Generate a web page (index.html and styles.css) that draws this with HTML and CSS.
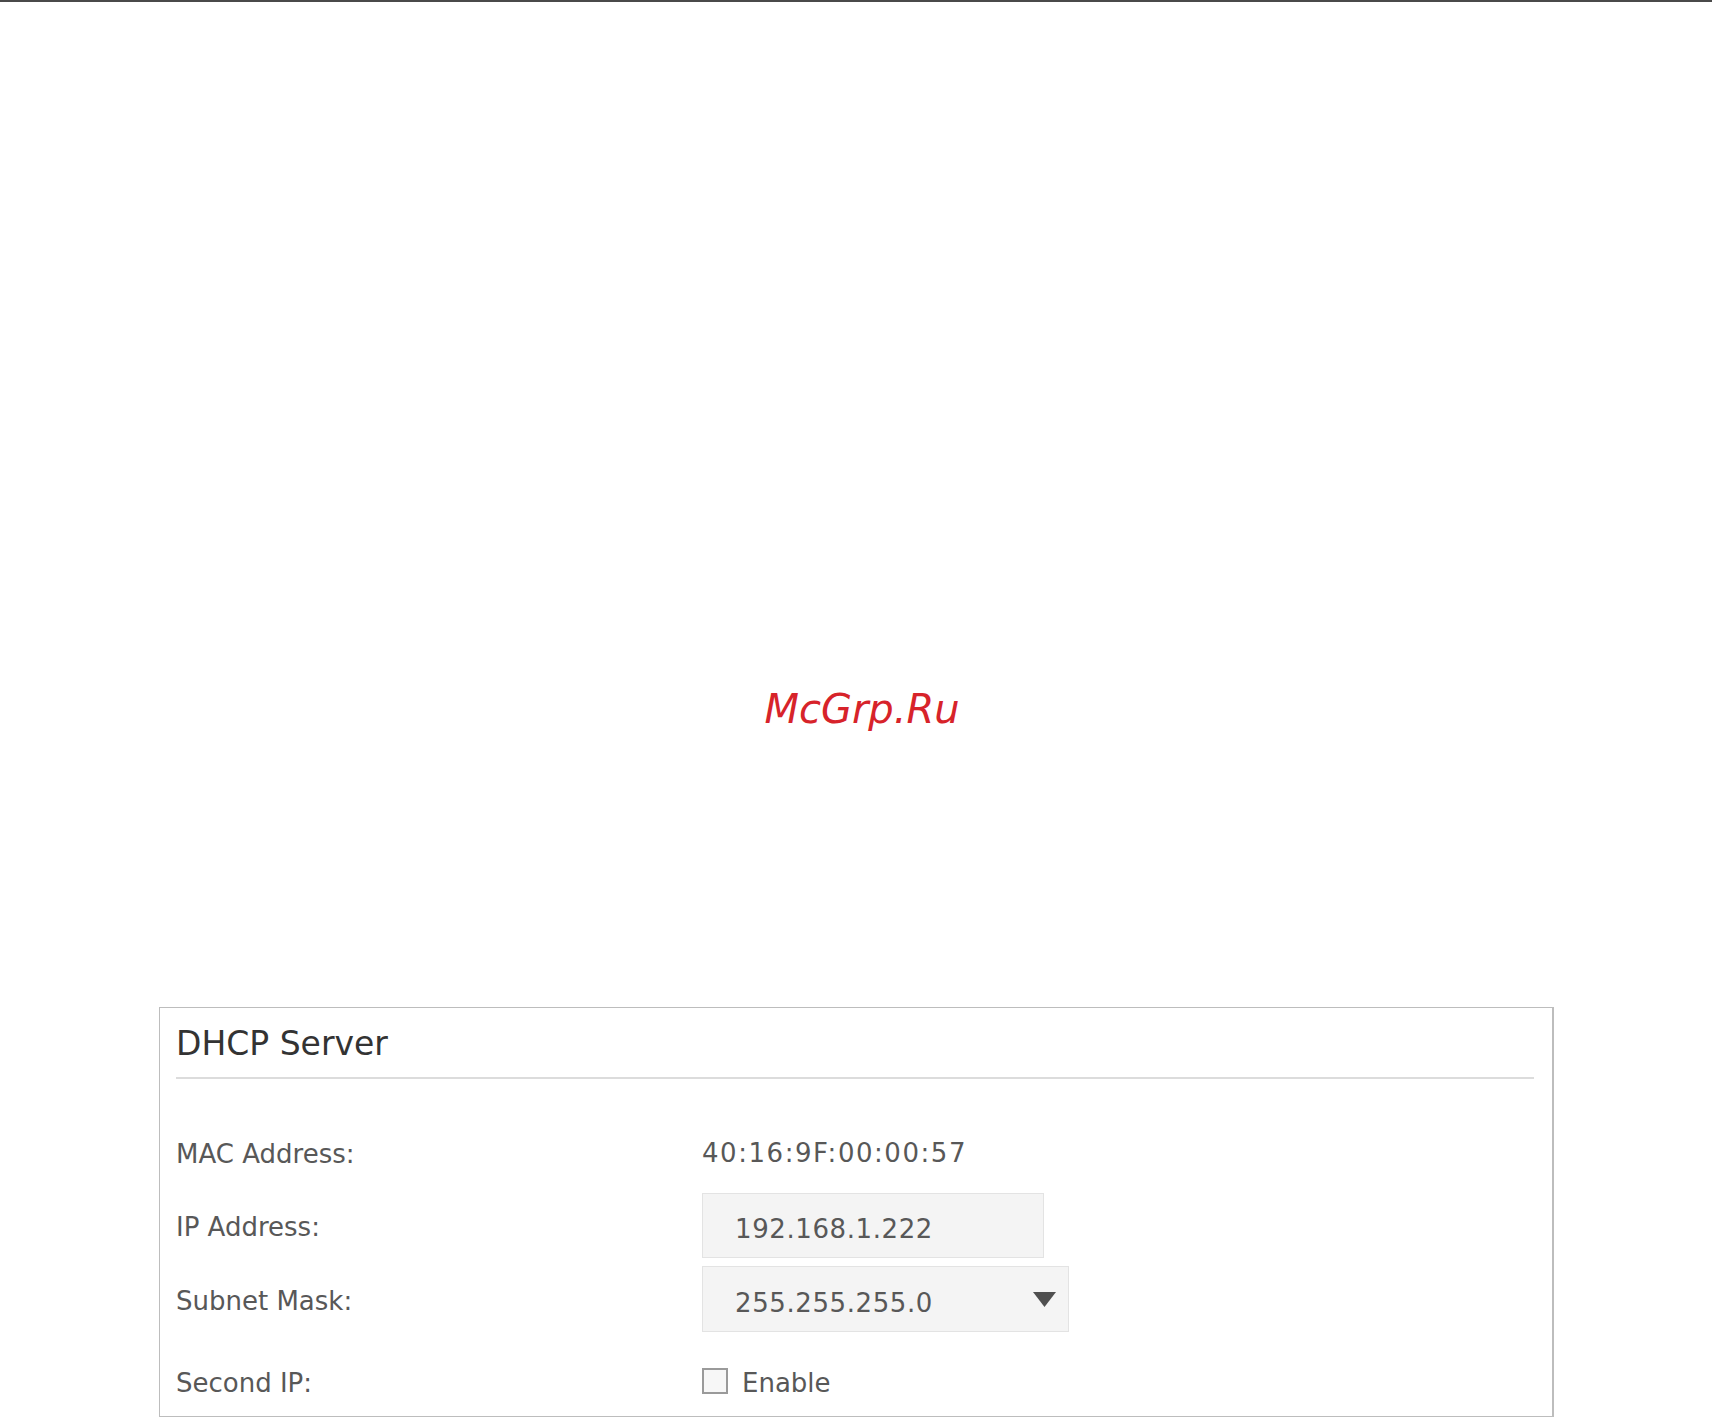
FILE: index.html
```html
<!DOCTYPE html>
<html lang="en">
<head>
<meta charset="utf-8">
<title>DHCP Server</title>
<link rel="stylesheet" href="styles.css">
</head>
<body>
<div class="topline"></div>
<div class="watermark">McGrp.Ru</div>
<section class="panel">
  <h2 class="panel-title">DHCP Server</h2>
  <div class="rows">
    <div class="row row-mac">
      <div class="label">MAC Address:</div>
      <div class="value value-mac">40:16:9F:00:00:57</div>
    </div>
    <div class="row row-ip">
      <div class="label">IP Address:</div>
      <div class="field field-ip">192.168.1.222</div>
    </div>
    <div class="row row-mask">
      <div class="label">Subnet Mask:</div>
      <div class="field field-select">255.255.255.0
        <svg class="caret" width="23" height="15" viewBox="0 0 23 15"><polygon points="0,0 23,0 11.5,15" fill="#4f4f4f"/></svg>
      </div>
    </div>
    <div class="row row-second">
      <div class="label">Second IP:</div>
      <label class="check"><span class="box"></span><span class="check-text">Enable</span></label>
    </div>
  </div>
</section>
</body>
</html>
```
FILE: styles.css
```css
html, body {
  margin: 0;
  padding: 0;
  background: #ffffff;
}
body {
  width: 1712px;
  height: 1417px;
  overflow: hidden;
  font-family: "DejaVu Sans", Verdana, sans-serif;
  color: #555555;
}
.topline {
  height: 2px;
  background: #4a4a4a;
}
.watermark {
  margin-top: 687px;
  height: 40px;
  line-height: 40px;
  font-size: 40px;
  font-style: italic;
  color: #d7232a;
  text-align: center;
  padding-left: 12px;
}
.panel {
  box-sizing: border-box;
  margin: 278px 0 0 159px;
  width: 1395px;
  height: 410px;
  border: 1px solid #bdbdbd;
  border-right-width: 2px;
  padding: 16px 18px 0 16px;
}
.panel-title {
  margin: 0;
  font-weight: normal;
  font-size: 33px;
  line-height: 40px;
  color: #333333;
  padding-bottom: 13px;
  border-bottom: 2px solid #dcdcdc;
}
.rows {
  display: flex;
  flex-direction: column;
}
.row {
  display: flex;
  align-items: center;
}
.label {
  width: 526px;
  flex: none;
  font-size: 26px;
  line-height: 32px;
  padding-top: 3px;
  color: #585858;
}
.row-mac {
  margin-top: 57px;
  height: 32px;
}
.row-ip {
  margin-top: 25px;
  height: 65px;
}
.row-mask {
  margin-top: 8px;
  height: 66px;
}
.row-second {
  margin-top: 33px;
  height: 32px;
}
.value {
  font-size: 26px;
  line-height: 32px;
  padding-top: 2px;
  color: #585858;
}
.value-mac {
  letter-spacing: 1.55px;
}
.field {
  box-sizing: border-box;
  position: relative;
  background: #f4f4f4;
  border: 1px solid #e3e3e3;
  font-size: 26px;
  color: #585858;
  padding: 8px 0 0 32px;
  letter-spacing: 0.6px;
}
.field-ip {
  width: 342px;
  height: 65px;
  line-height: 55px;
}
.field-select {
  width: 367px;
  height: 66px;
  line-height: 56px;
}
.caret {
  position: absolute;
  right: 12px;
  top: 25px;
}
.check {
  display: flex;
  align-items: center;
}
.box {
  box-sizing: border-box;
  width: 26px;
  height: 26px;
  border: 2px solid #9a9a9a;
  background: #f7f7f7;
}
.check-text {
  margin-left: 14px;
  font-size: 26px;
  line-height: 32px;
  padding-top: 3px;
  color: #585858;
}
```
